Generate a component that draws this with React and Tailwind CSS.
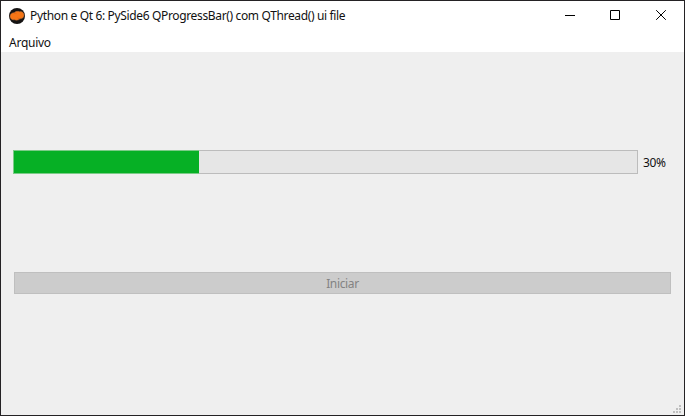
function AppIcon() {
  return (
    <svg className="size-4 shrink-0" viewBox="0 0 16 16">
      <circle cx="8" cy="8" r="8" fill="#151313" />
      <path
        d="M1 8.2C1.2 5.8 3 4.6 5.2 4.7C6.6 3.3 9 3 10.5 3.7C12.8 3.2 15 4.6 15 7C15.2 9.5 13.2 10.9 11 10.8C9.6 12.2 7.3 12.6 5.6 11.8C3.3 12.2 1.1 10.7 1 8.2Z"
        fill="#f57516"
        stroke="#ad6b3c"
        strokeWidth="0.5"
      />
      <path d="M5.2 5.2C6.2 5.1 6.8 5.2 7.4 5.6M10.8 10.5C9.8 10.5 9.1 10.3 8.6 9.9" fill="none" stroke="#c75510" strokeWidth="0.5" />
    </svg>
  );
}

function TitleBar() {
  return (
    <header className="flex h-[30px] shrink-0 items-center pl-2">
      <AppIcon />
      <h1 className="ml-[5px] flex-1 whitespace-nowrap text-[12px] leading-4 tracking-[-0.35px]">
        Python e Qt 6: PySide6 QProgressBar() com QThread() ui file
      </h1>
      <div className="flex h-full text-black">
        {["M1 5.5H11", "M0.5 0.5H9.5V9.5H0.5Z", "M0.2 0.2L9.8 9.8M9.8 0.2L0.2 9.8"].map((d) => (
          <button key={d} className="flex w-[46px] items-center justify-center pb-[2px]">
            <svg className="size-[10px] overflow-visible" viewBox="0 0 10 10" fill="none" stroke="currentColor">
              <path d={d} />
            </svg>
          </button>
        ))}
      </div>
    </header>
  );
}

function SizeGrip() {
  return (
    <svg className="h-2 w-2" viewBox="0 0 8 8" fill="#bfbfbf" shapeRendering="crispEdges">
      <path d="M6 0h2v2H6zM3 3h2v2H3zM6 3h2v2H6zM0 6h2v2H0zM3 6h2v2H3zM6 6h2v2H6z" />
    </svg>
  );
}

export default function App() {
  return (
    <div className="flex h-[416px] w-[685px] flex-col border border-[#242224] bg-white font-['Noto_Sans',sans-serif] text-[12px] text-[#111]">
      <TitleBar />
      <nav className="flex h-[21px] shrink-0 items-center pt-[2px] pl-2 leading-4 tracking-[-0.25px]">
        <span>Arquivo</span>
      </nav>
      <main className="flex flex-1 flex-col bg-[#efefef] pt-[98px]">
        <div className="flex items-center pl-3">
          <div className="h-6 w-[625px] border border-[#bcbcbc] bg-[#e6e6e6]">
            <div className="-my-px -ml-px h-6 w-[186px] border border-r-0 border-[#7bcb87] bg-[#06b025]" />
          </div>
          <span className="ml-[5px] pt-[2px] leading-4 tracking-[-0.4px]">30%</span>
        </div>
        <button className="mt-[98px] ml-[13px] flex h-[22px] w-[657px] items-center justify-center border border-[#bfbfbf] bg-[#cccccc] pt-px leading-4 tracking-[-0.35px] text-[#838383]">
          Iniciar
        </button>
        <div className="mt-auto flex justify-end pr-[3px] pb-[2px]">
          <SizeGrip />
        </div>
      </main>
    </div>
  );
}
